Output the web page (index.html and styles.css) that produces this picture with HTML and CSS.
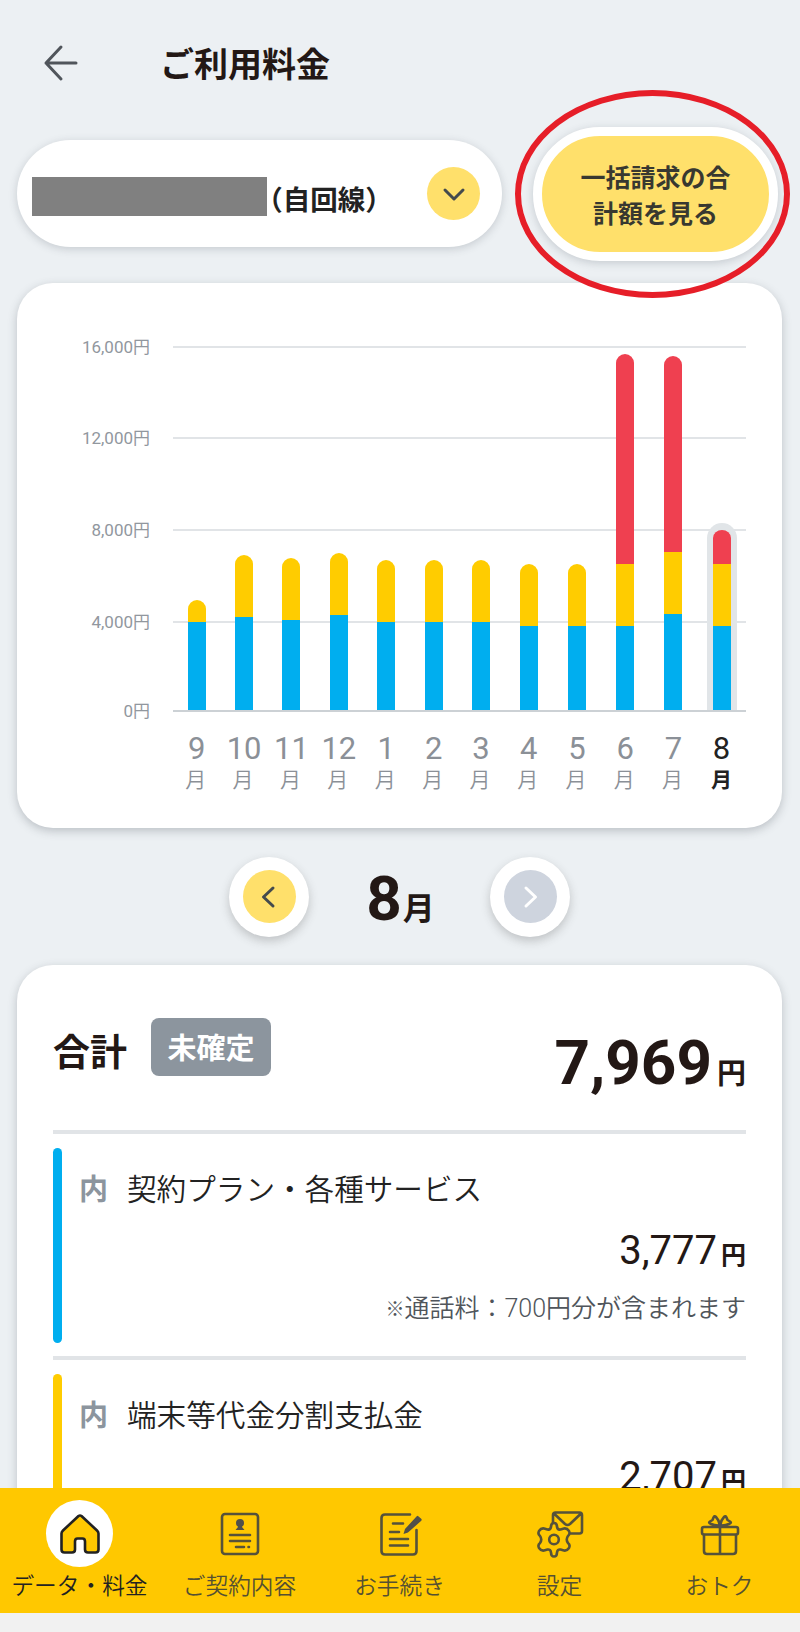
FILE: index.html
```html
<!DOCTYPE html>
<html lang="ja">
<head>
    <meta charset="UTF-8">
    <title>ご利用料金</title>
    <link rel="stylesheet" href="styles.css">
</head>
<body>
    <div class="screen">
        <header class="header">
            <svg class="back" width="36" height="38" viewBox="0 0 36 38">
                <path d="M18 3 L3 19 L18 35 M3 19 H33" />
            </svg>
            <h1>ご利用料金</h1>
        </header>

        <div class="line-row">
            <div class="line-select">
                <span class="masked"></span>
                <span class="line-name">（自回線）</span>
                <span class="circle">
                    <svg width="24" height="24" viewBox="0 0 24 24"><path d="M3 8 L12 17 L21 8" /></svg>
                </span>
            </div>
            <div class="total-wrap">
                <button class="total-btn">一括請求の合<br>計額を見る</button>
                <div class="red-ring"></div>
            </div>
        </div>

        <section class="card chart-card">
            <div class="y-axis">
                <span>16,000円</span>
                <span>12,000円</span>
                <span>8,000円</span>
                <span>4,000円</span>
                <span>0円</span>
            </div>
            <div class="plot">
                <div class="grid"><i></i><i></i><i></i><i></i><i></i></div>
                <div class="bars" id="bars"></div>
                <div class="months" id="months"></div>
            </div>
        </section>

        <div class="month-nav">
            <button class="round">
                <span class="circle">
                    <svg width="24" height="24" viewBox="0 0 24 24"><path d="M16 3 L6.500 12 L16 21" /></svg>
                </span>
            </button>
            <div class="month-now"><b>8</b>月</div>
            <button class="round">
                <span class="circle disabled">
                    <svg width="24" height="24" viewBox="0 0 24 24"><path d="M8 3 L17.500 12 L8 21" /></svg>
                </span>
            </button>
        </div>

        <section class="card detail-card">
            <div class="total">
                <h2>合計</h2>
                <span class="badge">未確定</span>
                <div class="total-price"><b>7,969</b>円</div>
            </div>
            <div class="item">
                <div class="bar blue"></div>
                <div class="item-body">
                    <div class="item-name"><b>内</b>契約プラン・各種サービス</div>
                    <div class="price"><span>3,777</span>円</div>
                    <div class="note"><small>※</small>通話料：700円分が含まれます</div>
                </div>
            </div>
            <div class="item">
                <div class="bar yellow"></div>
                <div class="item-body">
                    <div class="item-name"><b>内</b>端末等代金分割支払金</div>
                    <div class="price"><span>2,707</span>円</div>
                </div>
            </div>
        </section>
    </div>

    <nav class="tabs">
        <a class="tab active">
            <span class="tab-icon">
                <svg width="46" height="46" viewBox="0 0 46 46">
                    <path class="home" d="M6 19.500 Q4.500 21 4.500 22.500 V38.500 Q4.500 41.500 7.500 41.500 H15 Q18 41.500 18 38.500 V30.500 Q18 27.500 20.500 27.500 H25.500 Q28 27.500 28 30.500 V38.500 Q28 41.500 31 41.500 H38.500 Q41.500 41.500 41.500 38.500 V22.500 Q41.500 21 40 19.500 L24.500 5 Q23 4 21.500 5 Z" />
                </svg>
            </span>
            データ・料金
        </a>
        <a class="tab">
            <span class="tab-icon">
                <svg width="46" height="46" viewBox="0 0 46 46">
                    <rect x="5" y="3" width="36" height="40" rx="3" />
                    <circle class="fill" cx="23" cy="12" r="4" />
                    <path class="fill" d="M21 14 H25 V16 L27.500 19 H18.500 L21 16 Z" />
                    <path d="M13 24 H33 M13 30 H33 M19 36 H27 M31.500 36 H32" />
                </svg>
            </span>
            ご契約内容
        </a>
        <a class="tab">
            <span class="tab-icon">
                <svg width="46" height="46" viewBox="0 0 46 46">
                    <path d="M33 3.500 H8 Q4.500 3.500 4.500 7 V40 Q4.500 43.500 8 43.500 H36 Q39.500 43.500 39.500 40 V19" />
                    <path d="M16 12.500 H26 M13 21 H22 M13 28 H31 M13 34.500 H31" />
                    <path class="fill" d="M41 5 L44.500 8 Q45 9 44 10 L31 21.500 L26.500 23 L28 18 L39.500 5.500 Q40.500 4.500 41 5 Z" />
                </svg>
            </span>
            お手続き
        </a>
        <a class="tab">
            <span class="tab-icon settings">
                <svg width="50" height="50" viewBox="0 0 50 50">
                    <path d="M19 13 V6 Q19 3.500 21.500 3.500 H45.500 Q48 3.500 48 6 V22 Q48 24.500 45.500 24.500 H37 M20.500 5 L31 15 Q33.500 17 36 15 L46.500 5" />
                    <path d="M17 18 Q17 14 20 14 Q23 14 23 18 Q23.500 21 26.500 20.500 L30 19.500 Q33 19 35 22 Q36.500 25 34 27 Q31.500 30.500 34 34 Q36.500 36 35 39 Q33 42 30 41.500 L26.500 40.500 Q23.500 40 23 43.500 Q23 47.500 20 47.500 Q17 47.500 17 43.500 Q16.500 40 13.500 40.500 L10 41.500 Q7 42 5 39 Q3.500 36 6 34 Q8.500 30.500 6 27 Q3.500 25 5 22 Q7 19 10 19.500 L13.500 20.500 Q16.500 21 17 18 Z" />
                    <circle cx="20" cy="30.500" r="4.800" />
                </svg>
            </span>
            設定
        </a>
        <a class="tab">
            <span class="tab-icon">
                <svg width="46" height="46" viewBox="0 0 46 46">
                    <rect x="5" y="16" width="36" height="7.500" rx="2" />
                    <path d="M7 24 V40 Q7 43 10 43 H36 Q39 43 39 40 V24 M23 15 V43" />
                    <path d="M23 14.500 Q22 9 19 6 Q17.500 4.500 16.500 6.500 L15.500 9 L13 10.500 Q11 12 14 13 Q18 15 23 14.500 Q24 9 27 6 Q28.500 4.500 29.500 6.500 L30.500 9 L33 10.500 Q35 12 32 13 Q28 15 23 14.500 Z" />
                    <circle class="fill" cx="23" cy="14.500" r="2.500" />
                </svg>
            </span>
            おトク
        </a>
    </nav>
    <div class="system-bar"></div>

    <script>
        // segment heights from the bottom: plan, device, other
        let data = [
            { month: 9, values: [88, 22] },
            { month: 10, values: [93, 62] },
            { month: 11, values: [90, 62] },
            { month: 12, values: [95, 62] },
            { month: 1, values: [88, 62] },
            { month: 2, values: [88, 62] },
            { month: 3, values: [88, 62] },
            { month: 4, values: [84, 62] },
            { month: 5, values: [84, 62] },
            { month: 6, values: [84, 62, 210] },
            { month: 7, values: [96, 62, 196] },
            { month: 8, values: [84, 62, 34], current: true }
        ];
        let colors = ["blue", "yellow", "red"];

        data.forEach(item => {
            let bar = document.createElement("div");
            bar.className = item.current ? "stack current" : "stack";
            item.values.forEach((value, i) => {
                let part = document.createElement("div");
                part.className = colors[i];
                part.style.height = value + "px";
                bar.appendChild(part);
            });
            document.getElementById("bars").appendChild(bar);

            let label = document.createElement("div");
            label.className = item.current ? "month current-month" : "month";
            label.innerHTML = `<span>${item.month}</span><small>月</small>`;
            document.getElementById("months").appendChild(label);
        });
    </script>
</body>
</html>
```

FILE: styles.css
```css
* {
    box-sizing: border-box;
}

body {
    margin: 0;
    height: 1632px;
    display: flex;
    flex-direction: column;
    overflow: hidden;
    background: #ecf0f3;
    color: #231815;
    font-family: Roboto, "Noto Sans CJK JP", sans-serif;
}

h1, h2 {
    margin: 0;
}

b {
    font-weight: 700;
}

button {
    border: none;
    padding: 0;
    font-family: inherit;
}

svg {
    display: block;
    fill: none;
    stroke: #444a4d;
    stroke-width: 3;
    stroke-linecap: round;
    stroke-linejoin: round;
}

.blue {
    background: #00aeef;
}

.yellow {
    background: #ffcc00;
}

.red {
    background: #ef4050;
}

.screen {
    height: 1488px;
    padding: 0 18px 0 17px;
    overflow: hidden;
    flex: none;
}

.header {
    display: flex;
    align-items: center;
    height: 127px;
    padding-left: 26px;
}

.header .back {
    margin-bottom: 1px;
    stroke: #50555b;
}

.header h1 {
    margin: 2px 0 0 81px;
    font-size: 34px;
    line-height: 40px;
}

.line-row {
    display: flex;
    align-items: center;
    justify-content: space-between;
    height: 134px;
    margin-right: 4px;
}

.line-select {
    display: flex;
    align-items: center;
    width: 485px;
    height: 107px;
    margin-bottom: 1px;
    padding: 0 22px 0 15px;
    background: #fff;
    border-radius: 54px;
    box-shadow: 0 2px 8px rgba(60, 70, 80, 0.22);
}

.masked {
    width: 235px;
    height: 39px;
    margin-top: 6px;
    background: #808080;
}

.line-name {
    margin: 8px 0 0 2px;
    font-size: 27.5px;
    font-weight: bold;
    font-feature-settings: "halt";
    color: #222;
}

.circle {
    display: flex;
    align-items: center;
    justify-content: center;
    width: 53px;
    height: 53px;
    border-radius: 50%;
    background: #ffe06b;
}

.line-select .circle {
    margin-left: auto;
}

.disabled {
    background: #ced4de;
}

.disabled svg {
    stroke: #fff;
}

.total-wrap {
    position: relative;
}

.total-btn {
    display: block;
    width: 245px;
    height: 134px;
    padding-top: 5px;
    border: 9px solid #fff;
    border-radius: 67px;
    background: #ffe06b;
    box-shadow: 0 2px 8px rgba(60, 70, 80, 0.22);
    color: #383830;
    font-size: 25px;
    font-weight: bold;
    line-height: 36px;
}

.red-ring {
    position: absolute;
    left: -18px;
    top: -37px;
    width: 275px;
    height: 208px;
    border: 6px solid #e61e28;
    border-radius: 50%;
}

.card {
    background: #fff;
    border-radius: 36px;
    box-shadow: 0 3px 10px rgba(60, 70, 80, 0.28);
}

.chart-card {
    display: flex;
    height: 545px;
    margin-top: 22px;
    padding: 63px 36px 0 0;
}

.y-axis, .grid {
    display: grid;
    grid-template-rows: 91px 92px 92px 89px 2px;
}

.y-axis {
    width: 133px;
    height: 366px;
    text-align: right;
    font-size: 17px;
    line-height: 24px;
    color: #91979e;
}

.y-axis span {
    margin-top: -11px;
}

.plot {
    display: grid;
    grid-template-rows: 366px auto;
    width: 573px;
    height: 460px;
    margin-left: 23px;
}

.grid, .bars {
    grid-area: 1 / 1;
}

.grid i {
    border-top: 2px solid #e1e4e7;
}

.grid i:last-child {
    border-color: #ccd1d5;
}

/* the later columns are a little wider */
.bars, .months {
    display: grid;
    grid-template-columns: repeat(7, 47.4px) repeat(5, 48.2px);
}

.bars {
    align-items: end;
    justify-items: center;
    padding-bottom: 2px;
}

.stack {
    display: flex;
    flex-direction: column-reverse;
    width: 18px;
    border-radius: 9px 9px 0 0;
    overflow: hidden;
}

.current {
    box-sizing: content-box;
    border: 6px solid #e1e5e8;
    border-top-width: 7px;
    border-bottom: 0;
    border-radius: 15px 15px 0 0;
}

.months {
    padding-top: 18px;
}

.month {
    display: flex;
    flex-direction: column;
    align-items: center;
    color: #8b9097;
    font-size: 31px;
    line-height: 38px;
}

.month small {
    margin-right: 2px;
    font-size: 21px;
    line-height: 24px;
    font-weight: 350;
}

.current-month {
    color: #222;
}

.current-month small {
    margin-right: 0;
    font-weight: bold;
}

.month-nav {
    display: flex;
    align-items: center;
    justify-content: center;
    height: 137px;
}

.round {
    display: flex;
    align-items: center;
    justify-content: center;
    width: 80px;
    height: 80px;
    border-radius: 50%;
    background: #fff;
    box-shadow: 0 4px 10px rgba(60, 60, 60, 0.25);
}

.month-now {
    width: 181px;
    padding: 14px 0 0 2px;
    text-align: center;
    font-size: 32px;
    font-weight: bold;
    line-height: 70px;
}

.month-now b {
    margin-right: 1px;
    font-size: 62px;
}

.detail-card {
    height: 900px;
    padding: 0 36px;
}

.total {
    display: flex;
    align-items: flex-start;
    height: 165px;
}

.total h2 {
    margin-top: 64px;
    font-size: 37px;
    line-height: 50px;
}

.badge {
    width: 120px;
    height: 58px;
    margin: 53px 0 0 24px;
    padding-top: 2px;
    border-radius: 8px;
    background: #8c959e;
    color: #fff;
    font-size: 29px;
    font-weight: bold;
    line-height: 58px;
    text-align: center;
}

.total-price {
    margin: 63px 0 0 auto;
    font-size: 29px;
    font-weight: bold;
    line-height: 70px;
}

.total-price b {
    margin-right: 5px;
    font-size: 62px;
}

.item {
    display: flex;
    height: 226px;
    padding: 14px 0 13px;
    border-top: 4px solid #e1e4e7;
}

.bar {
    width: 9px;
    border-radius: 5px;
}

.item-body {
    flex: 1;
    padding: 22px 0 0 17px;
}

.item-name {
    font-size: 29.6px;
    line-height: 40px;
    font-weight: 350;
    color: #222;
}

.item-name b {
    margin-right: 19px;
    font-size: 29px;
    color: #8c959e;
}

.price {
    margin-top: 17px;
    text-align: right;
    font-size: 25px;
    font-weight: bold;
    line-height: 48px;
}

.price span {
    margin-right: 4px;
    font-size: 40px;
    font-weight: normal;
}

.note {
    margin-top: 12px;
    text-align: right;
    font-size: 25px;
    line-height: 34px;
    font-weight: 350;
    color: #50555b;
}

.note small {
    font-size: 19px;
    vertical-align: 1px;
}

.tabs {
    display: grid;
    grid-template-columns: repeat(5, 160px);
    height: 125px;
    background: #ffc800;
}

.tab {
    display: flex;
    flex-direction: column;
    align-items: center;
    gap: 2px;
    padding: 12px 1px 0 0;
    font-size: 22.7px;
    line-height: 35px;
    font-weight: 350;
    color: #555032;
    white-space: nowrap;
}

.tab-icon {
    display: flex;
    align-items: center;
    justify-content: center;
    width: 67px;
    height: 67px;
    border-radius: 50%;
}

.tab svg {
    stroke: #56523a;
    stroke-width: 2.6;
}

.settings svg {
    margin-right: 2px;
}

.tab .fill {
    fill: #50504a;
    stroke: none;
}

.active {
    color: #222;
}

.active .tab-icon {
    background: #fff;
}

.tab .home {
    fill: #ffc800;
    stroke: #222;
}

.system-bar {
    height: 19px;
    background: #f1f1f1;
}
```
